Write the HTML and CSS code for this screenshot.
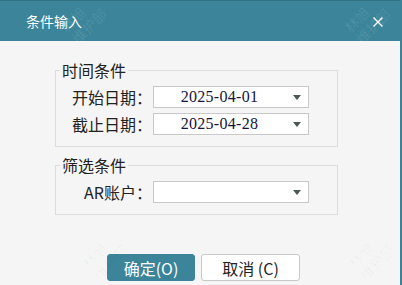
FILE: index.html
```html
<!DOCTYPE html>
<html lang="zh">
<head>
    <meta charset="UTF-8">
    <title>条件输入</title>
    <link rel="stylesheet" href="styles.css">
</head>
<body>
<div class="dialog">
    <div class="titlebar">
        <span class="title">条件输入</span>
        <svg class="close" width="10" height="10" viewBox="0 0 10 10">
            <path d="M0.5 0.5 L9.5 9.5 M9.5 0.5 L0.5 9.5" stroke="#ffffff" stroke-width="1.4" fill="none"/>
        </svg>
    </div>
    <div class="content">
        <fieldset class="group">
            <legend>时间条件</legend>
            <div class="row">
                <label>开始日期：</label>
                <div class="combo"><span class="value">2025-04-01</span><span class="arrow"></span></div>
            </div>
            <div class="row">
                <label>截止日期：</label>
                <div class="combo"><span class="value">2025-04-28</span><span class="arrow"></span></div>
            </div>
        </fieldset>
        <fieldset class="group">
            <legend>筛选条件</legend>
            <div class="row">
                <label>AR账户：</label>
                <div class="combo"><span class="value"></span><span class="arrow"></span></div>
            </div>
        </fieldset>
        <div class="actions">
            <button class="btn primary">确定(O)</button>
            <button class="btn cancel">取消 (C)</button>
        </div>
    </div>
    <!-- watermark -->
    <span class="mark mark-top1">林旭<br>维护部</span>
    <span class="mark mark-top2">林旭<br>维护部</span>
    <span class="mark mark-low1">林旭<br>维护部</span>
    <span class="mark mark-low2">林旭<br>维护部</span>
</div>
</body>
</html>
```

FILE: styles.css
```css
body {
    margin: 0;
    font-family: "Noto Sans CJK SC", "Noto Sans", sans-serif;
    background: #f5f5f5;
}
.dialog {
    position: relative;
    width: 402px;
    height: 285px;
    box-sizing: border-box;
    background: #f5f5f5;
    border-right: 2px solid #3a8399;
    overflow: hidden;
}
.titlebar {
    height: 40px;
    border-top: 1px solid #2f7284;
    background: #3b849a;
    display: flex;
    align-items: center;
    justify-content: space-between;
    padding: 0 17px 0 26px;
    color: #ffffff;
}
.title {
    font-size: 14px;
    line-height: 16px;
}
.close {
    display: block;
    margin-top: 2px;
}
.content {
    padding: 21px 0 0 55px;
}
.group {
    width: 283px;
    box-sizing: border-box;
    margin: 0;
    padding: 8px 0 11px 0;
    border: 1px solid #dcdcdc;
    display: flex;
    flex-direction: column;
    gap: 5px;
}
.group + .group {
    margin-top: 10px;
}
.group legend {
    font-size: 16px;
    line-height: 16px;
    color: #222;
    padding: 0 2px;
    margin-left: 4px;
}
.row {
    display: grid;
    grid-template-columns: 96px 156px;
    column-gap: 1px;
    align-items: center;
}
.row label {
    text-align: right;
    font-size: 16px;
    line-height: 22px;
    color: #222;
}
.combo {
    height: 22px;
    box-sizing: border-box;
    border: 1px solid #c8c8c8;
    background: #ffffff;
    display: flex;
    align-items: center;
}
.value {
    flex: 1;
    padding-right: 8px;
    text-align: center;
    font-family: "Liberation Serif", serif;
    font-size: 16px;
    letter-spacing: 0.3px;
    color: #14143c;
}
.arrow {
    width: 0;
    height: 0;
    margin-right: 7px;
    border-left: 4.5px solid transparent;
    border-right: 4.5px solid transparent;
    border-top: 5px solid #4b5751;
}
.actions {
    display: flex;
    gap: 6px;
    margin-top: 39px;
    padding-left: 52px;
}
.btn {
    height: 27px;
    box-sizing: border-box;
    border-radius: 3px;
    font-family: "Noto Sans CJK SC", sans-serif;
    font-size: 16px;
    padding: 0;
    cursor: pointer;
}
.primary {
    width: 88px;
    background: #3b849a;
    border: 1px solid #3b849a;
    color: #ffffff;
}
.cancel {
    width: 99px;
    background: #ffffff;
    border: 1px solid #c8c8c8;
    color: #222;
}
.mark {
    position: absolute;
    font-size: 14px;
    line-height: 16px;
    transform: rotate(-45deg);
    pointer-events: none;
    color: rgba(255, 255, 255, 0.1);
}
.mark-top1 {
    left: 62px;
    top: 4px;
}
.mark-top2 {
    left: 346px;
    top: 4px;
}
.mark-low1 {
    left: 84px;
    top: 240px;
    color: rgba(0, 0, 0, 0.035);
}
.mark-low2 {
    left: 350px;
    top: 240px;
    color: rgba(0, 0, 0, 0.035);
}
```
